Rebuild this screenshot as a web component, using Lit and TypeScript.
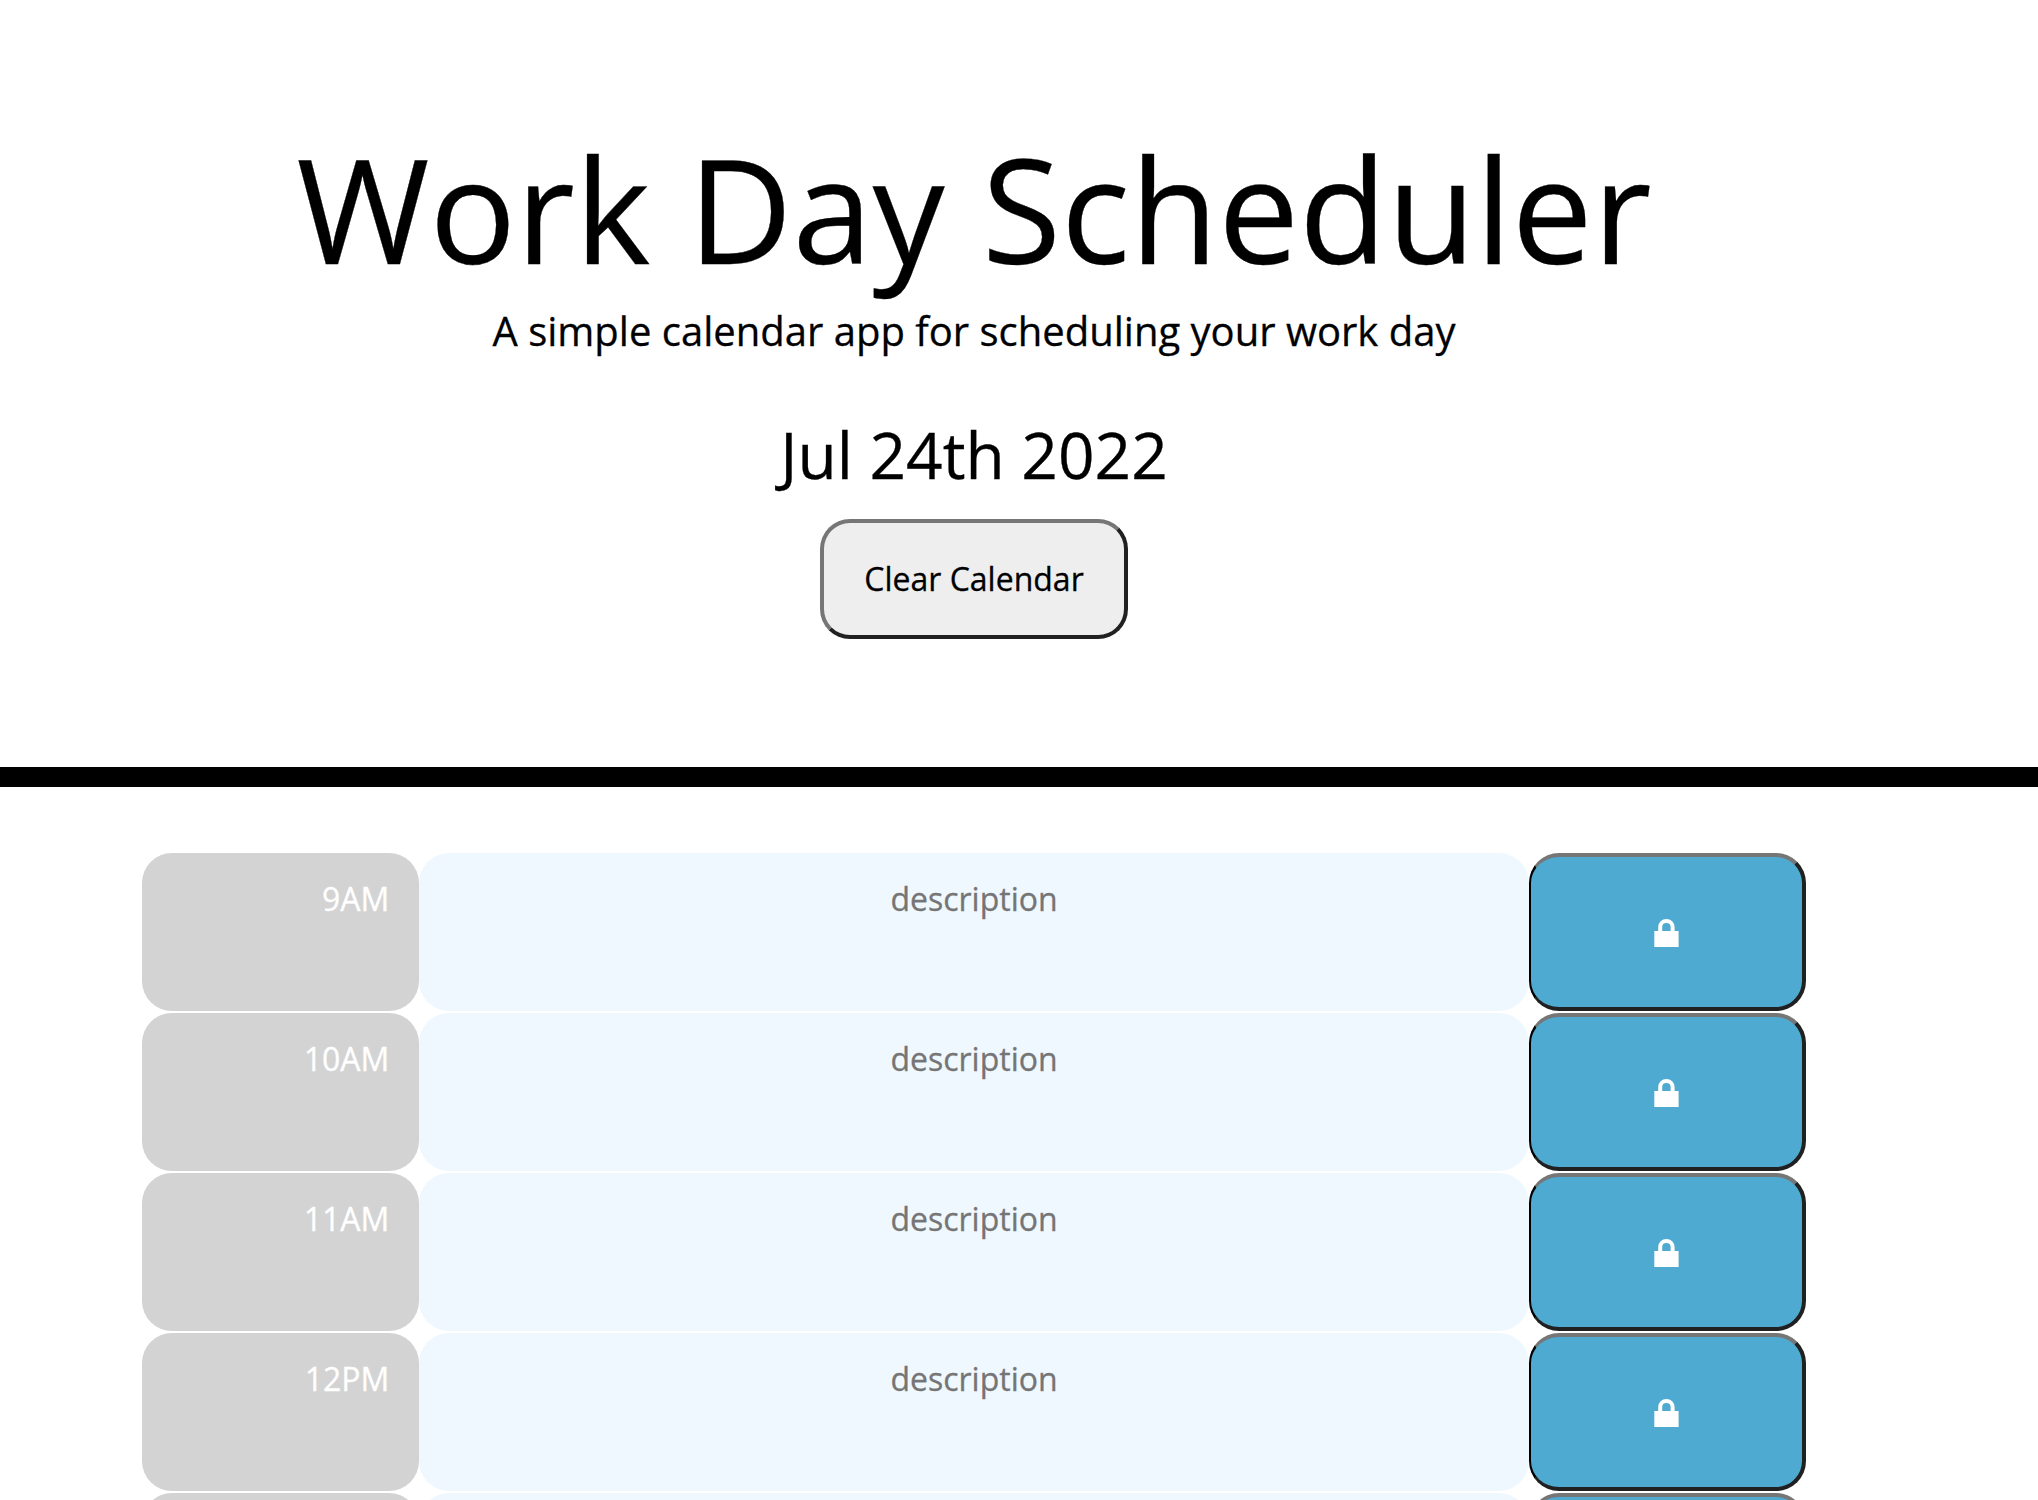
import { LitElement, html, css } from "lit";
import { customElement, property } from "lit/decorators.js";

@customElement("time-block")
class TimeBlock extends LitElement {
  @property() hour = "";

  static styles = css`
    :host {
      display: grid;
      grid-template-columns: 2fr 8fr 2fr;
      height: 158px;
    }
    .hour,
    .description,
    .save {
      box-sizing: border-box;
      min-width: 0;
      height: 158px;
      margin: 0;
      border-radius: 30px;
      font: 400 32px/48px "Open Sans", sans-serif;
      -webkit-text-stroke: 0.3px;
    }
    .hour {
      padding: 22px 30px 0 0;
      background: #d3d3d3;
      color: #fff;
      text-align: right;
    }
    .description {
      padding: 22px 30px 0;
      border: 0;
      outline: 0;
      resize: none;
      overflow: hidden;
      background: #f0f8ff;
      color: #000;
      text-align: center;
    }
    .description::placeholder {
      color: #757575;
      opacity: 1;
    }
    .save {
      display: flex;
      align-items: center;
      justify-content: center;
      padding: 0;
      border: 4px solid;
      border-left-width: 2px;
      border-color: #767676 #212121 #212121 #000;
      background: #4eaad0;
    }
    .lock {
      display: block;
      width: 25px;
      height: 28px;
      margin: 2px 0 0;
    }
  `;

  render() {
    return html`
      <div class="hour">${this.hour}</div>
      <textarea class="description" placeholder=${this.hour ? "description" : ""}></textarea>
      <button class="save" aria-label="Save">
        <svg class="lock" viewBox="0 0 25 28">
          <path d="M.3 12H24.600V28H.3Z" fill="#fff" />
          <path d="M6.200 13V8a6.200 6 0 0 1 12.400 0V13" fill="none" stroke="#fff" stroke-width="4" />
        </svg>
      </button>
    `;
  }
}

@customElement("app-root")
class AppRoot extends LitElement {
  static styles = css`
    :host {
      display: block;
      height: 1500px;
      overflow: hidden;
      background: #fff;
      color: #000;
      font: 400 32px/48px "Open Sans", sans-serif;
      -webkit-text-stroke: 0.3px;
    }
    .header {
      box-sizing: border-box;
      display: flex;
      flex-direction: column;
      align-items: center;
      height: 787px;
      padding: 122px 90px 0 0;
      border-bottom: 20px solid #000;
      text-align: center;
      white-space: nowrap;
    }
    .title {
      margin: 0;
      font-size: 144px;
      font-weight: 400;
      line-height: 173px;
    }
    .lead {
      margin: 0;
      padding-top: 6px;
      font-size: 40px;
      line-height: 60px;
    }
    .date {
      margin: 0;
      padding-top: 46px;
      font-size: 64px;
      line-height: 96px;
    }
    .clear {
      box-sizing: border-box;
      width: 308px;
      height: 120px;
      margin-top: 16px;
      padding: 0;
      border: 4px solid;
      border-color: #767676 #212121 #212121 #767676;
      border-radius: 30px;
      background: #eee;
      color: #000;
      font: 400 32px/48px "Open Sans", sans-serif;
      -webkit-text-stroke: 0.3px;
    }
    .blocks {
      display: flex;
      flex-direction: column;
      gap: 2px;
      width: 1664px;
      margin: 66px 0 0 142px;
    }
  `;

  private hours = ["9AM", "10AM", "11AM", "12PM", ""];

  render() {
    return html`
      <header class="header">
        <h1 class="title">Work Day Scheduler</h1>
        <p class="lead">A simple calendar app for scheduling your work day</p>
        <p class="date">Jul 24th 2022</p>
        <button class="clear">Clear Calendar</button>
      </header>
      <main class="blocks">
        ${this.hours.map((hour) => html`<time-block .hour=${hour}></time-block>`)}
      </main>
    `;
  }
}
